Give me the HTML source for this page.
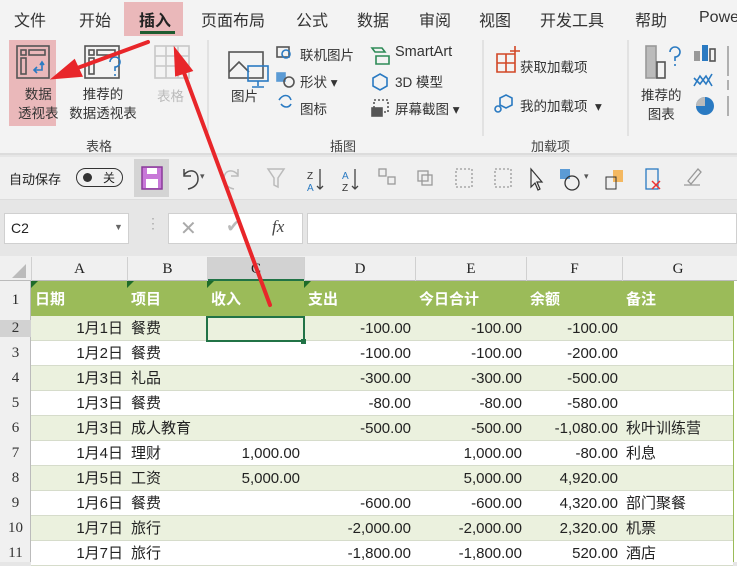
<!DOCTYPE html>
<html><head><meta charset="utf-8"><style>
*{margin:0;padding:0;box-sizing:border-box}
body{width:737px;height:562px;overflow:hidden;position:relative;background:#e6e6e6;font-family:"Liberation Sans","Noto Sans CJK SC",sans-serif;color:#222}
.a{position:absolute;white-space:nowrap}
.tab{top:7px;font-size:16px;color:#333}
.rb{font-size:13.5px;color:#333}
.gl{font-size:13px;color:#444}
.cell{position:absolute;height:25px;line-height:25px;font-size:15px;padding:0 4px;overflow:visible;white-space:nowrap}
.r{text-align:right}
</style></head><body>
<div class="a" style="left:0;top:0;width:737px;height:36px;background:#f3f3f3"></div>
<div class="a" style="left:124px;top:2px;width:59px;height:34px;background:#eab8ba"></div>
<div class="a tab" style="left:14px">文件</div>
<div class="a tab" style="left:79px">开始</div>
<div class="a tab" style="left:139px;font-weight:bold;color:#222">插入</div>
<div class="a" style="left:140px;top:31px;width:35px;height:3px;background:#1e5b2f"></div>
<div class="a tab" style="left:201px">页面布局</div>
<div class="a tab" style="left:296px">公式</div>
<div class="a tab" style="left:357px">数据</div>
<div class="a tab" style="left:419px">审阅</div>
<div class="a tab" style="left:479px">视图</div>
<div class="a tab" style="left:540px">开发工具</div>
<div class="a tab" style="left:635px">帮助</div>
<div class="a tab" style="left:699px;top:9px">Powe</div>
<div class="a" style="left:0;top:36px;width:737px;height:119px;background:#f3f3f3;border-bottom:2px solid #dcdcdc"></div>
<div class="a" style="left:9px;top:40px;width:47px;height:86px;background:#eab8ba"></div>
<svg class="a" style="left:0;top:36px" width="737" height="100">
<g fill="none" stroke="#555" stroke-width="1.6">
<rect x="17" y="10" width="32" height="32"/><rect x="21" y="14" width="5" height="5"/><rect x="29" y="14" width="16" height="5"/><rect x="21" y="22" width="5" height="16"/>
<path d="M42 26v8h-8m3-3l-3 3 3 3M40 29l2-3 2 3" stroke="#2a7ac2"/>
<rect x="85" y="10" width="34" height="32"/><rect x="89" y="14" width="5" height="5"/><rect x="97" y="14" width="18" height="5"/><rect x="89" y="22" width="5" height="16"/>
<path d="M110 26a5 5 0 1 1 5 5v4M115 38v2" stroke="#2a7ac2"/>
<g stroke="#c8c8c8"><rect x="155" y="10" width="34" height="32"/><path d="M155 20h34M155 30h34M166 10v32M178 10v32"/></g>
<rect x="229" y="16" width="34" height="26"/><path d="M229 36l10-10 10 10" />
<rect x="248" y="30" width="20" height="15" stroke="#2a7ac2"/><path d="M258 45v5M252 51h12" stroke="#2a7ac2"/>
<rect x="277" y="11" width="12" height="10"/><circle cx="286" cy="18" r="4" stroke="#2a7ac2"/>
<rect x="277" y="37" width="8" height="8" fill="#5b9bd5" stroke="#5b9bd5"/><circle cx="289" cy="46" r="5"/>
<path d="M279 64c4-6 10-6 12 0M281 68c3 4 8 4 10 0" stroke="#2a7ac2"/>
<path d="M372 12h10l3 4h-10zM376 20h13v8h-13z" stroke="#2e8b57"/>
<path d="M380 38l7 4v8l-7 4-7-4v-8z" stroke="#2a7ac2"/>
<rect x="374" y="64" width="14" height="12" stroke-dasharray="2 2"/><rect x="372" y="72" width="10" height="8" fill="#555"/>
<path d="M497 18h18v18h-18zM497 27h18M506 18v18M515 10v10M510 15h10" stroke="#d24726"/>
<path d="M506 59l6 3v7l-6 3-6-3v-7z" stroke="#2a7ac2"/><circle cx="498" cy="73" r="3" stroke="#2a7ac2"/>
<rect x="646" y="10" width="10" height="32" fill="#bbb" stroke="#999"/><rect x="657" y="26" width="8" height="16"/>
<path d="M670 16a5 5 0 1 1 5 5v4M675 28v2" stroke="#2a7ac2"/>
<rect x="694" y="15" width="6" height="10" fill="#999" stroke="none"/><rect x="702" y="9" width="6" height="16" fill="#2a7ac2" stroke="none"/><rect x="710" y="13" width="5" height="12"/>
<path d="M694 50l6-10 6 8 6-10M694 42l6 6 6-8 6 10" stroke="#2a7ac2"/>
<circle cx="705" cy="70" r="9" fill="#2a7ac2" stroke="none"/><path d="M705 61v9h-9a9 9 0 0 1 9-9z" fill="#bbb" stroke="none"/>
</g>
<path d="M728 10v30M728 44v10M728 60v20" stroke="#999" stroke-width="1.5"/>
<path d="M208 4v110M483 4v110M628 4v110" stroke="#d0d0d0"/>
</svg>
<div class="a rb" style="left:18px;top:85px;line-height:19px;text-align:center">数据<br>透视表</div>
<div class="a rb" style="left:65px;top:85px;line-height:19px;text-align:center;width:76px">推荐的<br>数据透视表</div>
<div class="a rb" style="left:157px;top:85px;color:#bbb">表格</div>
<div class="a gl" style="left:86px;top:136px">表格</div>
<div class="a rb" style="left:231px;top:85px">图片</div>
<div class="a rb" style="left:300px;top:44px">联机图片</div>
<div class="a rb" style="left:300px;top:71px">形状 ▾</div>
<div class="a rb" style="left:300px;top:98px">图标</div>
<div class="a gl" style="left:330px;top:136px">插图</div>
<div class="a rb" style="left:395px;top:44px;font-size:14.5px">SmartArt</div>
<div class="a rb" style="left:395px;top:71px">3D 模型</div>
<div class="a rb" style="left:395px;top:98px">屏幕截图 ▾</div>
<div class="a rb" style="left:520px;top:56px">获取加载项</div>
<div class="a rb" style="left:520px;top:95px">我的加载项 &nbsp;▾</div>
<div class="a gl" style="left:531px;top:136px">加载项</div>
<div class="a rb" style="left:641px;top:86px;line-height:19px;text-align:center">推荐的<br>图表</div>
<div class="a" style="left:0;top:157px;width:737px;height:43px;background:#f0f0f0;border-bottom:1px solid #ddd"></div>
<div class="a" style="left:9px;top:169px;font-size:13px">自动保存</div>
<div class="a" style="left:76px;top:168px;width:47px;height:19px;border:1.5px solid #333;border-radius:10px"></div>
<div class="a" style="left:83px;top:173px;width:9px;height:9px;border-radius:50%;background:#333"></div>
<div class="a" style="left:103px;top:169px;font-size:12px">关</div>
<div class="a" style="left:134px;top:159px;width:35px;height:38px;background:#d4d4d4"></div>
<svg class="a" style="left:0;top:157px" width="737" height="43">
<rect x="142" y="10" width="20" height="22" fill="#c878d8" stroke="#8a3a9a" stroke-width="1.5"/><rect x="147" y="11" width="10" height="6" fill="#fff"/><rect x="146" y="22" width="12" height="9" fill="#fff"/>
<g fill="none" stroke="#444" stroke-width="1.5"><path d="M184 12v7h7M184 18c4-6 14-6 14 4 0 6-5 9-10 10"/></g>
<g fill="none" stroke="#bbb" stroke-width="1.5"><path d="M238 12v7h-7M238 18c-4-6-14-6-14 4 0 6 5 9 10 10"/><path d="M268 12h16l-6 9v9l-4-2v-7z"/></g>
<text x="307" y="22" font-size="10" fill="#333" font-family="Liberation Sans">Z</text><text x="307" y="34" font-size="10" fill="#2a7ac2" font-family="Liberation Sans">A</text>
<text x="342" y="22" font-size="10" fill="#2a7ac2" font-family="Liberation Sans">A</text><text x="342" y="34" font-size="10" fill="#333" font-family="Liberation Sans">Z</text>
<g fill="none" stroke="#444" stroke-width="1.3"><path d="M320 12v20m-3-3l3 3 3-3M355 12v20m-3-3l3 3 3-3"/></g>
<g fill="none" stroke="#999" stroke-width="1.3"><rect x="379" y="12" width="7" height="7"/><rect x="388" y="20" width="7" height="7"/><rect x="418" y="14" width="10" height="10"/><rect x="422" y="18" width="10" height="10"/><rect x="456" y="12" width="16" height="18" stroke-dasharray="2 2"/><rect x="495" y="12" width="16" height="18" stroke-dasharray="2 2"/></g>
<path d="M531 12v18l4-4 3 7 2-1-3-7h5z" fill="none" stroke="#333" stroke-width="1.2"/>
<rect x="560" y="12" width="10" height="10" fill="#5b9bd5"/><circle cx="572" cy="26" r="7" fill="none" stroke="#333" stroke-width="1.3"/>
<rect x="613" y="13" width="10" height="12" fill="#f4b860"/><path d="M606 20h10v12h-10z" fill="none" stroke="#333"/>
<rect x="646" y="12" width="12" height="20" fill="none" stroke="#2a7ac2" stroke-width="1.3"/><path d="M652 24l8 8m0-8l-8 8" stroke="#e33" stroke-width="1.5"/>
<path d="M684 28h16M688 24l10-12 3 3-10 12z" fill="none" stroke="#999" stroke-width="1.3"/>
</svg>
<div class="a" style="left:200px;top:171px;font-size:9px;color:#555">▾</div>
<div class="a" style="left:584px;top:171px;font-size:9px;color:#555">▾</div>
<div class="a" style="left:4px;top:213px;width:125px;height:31px;background:#fff;border:1px solid #d0d0d0"></div>
<div class="a" style="left:11px;top:220px;font-size:14px">C2</div>
<div class="a" style="left:114px;top:222px;font-size:9px;color:#666">▼</div>
<div class="a" style="left:146px;top:215px;font-size:14px;color:#aaa">⋮</div>
<div class="a" style="left:168px;top:213px;width:135px;height:31px;background:#fff;border:1px solid #d0d0d0"></div>
<div class="a" style="left:180px;top:216px;font-size:20px;color:#aaa">✕</div>
<div class="a" style="left:226px;top:216px;font-size:18px;color:#bbb">✔</div>
<div class="a" style="left:272px;top:217px;font-size:17px;font-style:italic;font-family:'Liberation Serif',serif;color:#444">fx</div>
<div class="a" style="left:307px;top:213px;width:430px;height:31px;background:#fff;border:1px solid #d0d0d0"></div>
<div class="a" style="left:0;top:256px;width:737px;height:306px;background:#fff"></div>
<div class="a" style="left:0;top:256px;width:737px;height:25px;background:#f0f0f0;border-bottom:1px solid #bbb"></div>
<div class="a" style="left:207px;top:257px;width:97px;height:24px;background:#d2d2d2;border-bottom:2px solid #217346"></div>
<svg class="a" style="left:10px;top:262px" width="18" height="18"><path d="M16 2v14H2z" fill="#bbb"/></svg>
<div id="g"></div>
<svg class="a" style="left:0;top:0" width="737" height="562">
<g stroke="#e8262a" stroke-width="4" fill="#e8262a" stroke-linecap="round">
<path d="M148 42L72 70"/><path d="M56 77l18-15 6 13z"/>
<path d="M270 305L183 70"/><path d="M176 52l14 18-13 4z"/>
</g></svg>
<script>
var cols=[[0,31],[31,127],[127,207],[207,304],[304,415],[415,526],[526,622],[622,733]];
var L="ABCDEFG";var h="";
for(var i=0;i<7;i++){var c=cols[i+1];h+='<div class="a" style="left:'+c[0]+'px;top:257px;width:'+(c[1]-c[0])+'px;height:24px;line-height:24px;text-align:center;font-family:Liberation Serif,serif;font-size:15px;border-left:1px solid #d0d0d0">'+L[i]+'</div>';}
h+='<div class="a" style="left:0;top:281px;width:31px;height:281px;background:#f0f0f0;border-right:1px solid #bbb"></div>';
h+='<div class="a" style="left:31px;top:281px;width:702px;height:35px;background:#9bbb59"></div>';
var hd=["日期","项目","收入","支出","今日合计","余额","备注"];
for(var i=0;i<7;i++){h+='<div class="a" style="left:'+(cols[i+1][0]+4)+'px;top:288px;color:#fff;font-weight:bold;font-size:15px">'+hd[i]+'</div>';}
for(var i=1;i<5;i++)h+='<svg class="a" style="left:'+cols[i][0]+'px;top:281px" width="7" height="7"><path d="M0 0h7L0 7z" fill="#1e6b28"/></svg>';
h+='<div class="a" style="left:0;top:292px;width:31px;text-align:center;font-family:Liberation Serif,serif;font-size:15px">1</div>';
var d=[["1月1日","餐费","","-100.00","-100.00","-100.00",""],["1月2日","餐费","","-100.00","-100.00","-200.00",""],["1月3日","礼品","","-300.00","-300.00","-500.00",""],["1月3日","餐费","","-80.00","-80.00","-580.00",""],["1月3日","成人教育","","-500.00","-500.00","-1,080.00","秋叶训练营"],["1月4日","理财","1,000.00","","1,000.00","-80.00","利息"],["1月5日","工资","5,000.00","","5,000.00","4,920.00",""],["1月6日","餐费","","-600.00","-600.00","4,320.00","部门聚餐"],["1月7日","旅行","","-2,000.00","-2,000.00","2,320.00","机票"],["1月7日","旅行","","-1,800.00","-1,800.00","520.00","酒店"]];
for(var r=0;r<10;r++){var y=316+r*25;
h+='<div class="a" style="left:31px;top:'+y+'px;width:702px;height:25px;background:'+(r%2==0?'#ebf1de':'#fff')+';border-bottom:1px solid #d6dccb"></div>';
h+='<div class="a" style="left:0;top:'+(y+4)+'px;width:31px;text-align:center;font-family:Liberation Serif,serif;font-size:15px;color:#333;'+(r==0?'background:#d2d2d2;':'')+'">'+(r+2)+'</div>';
for(var i=0;i<7;i++){var c=cols[i+1];var right=(i!=1&&i!=6);
h+='<div class="cell'+(right?' r':'')+'" style="left:'+c[0]+'px;top:'+y+'px;width:'+(c[1]-c[0])+'px">'+d[r][i]+'</div>';}}
h+='<div class="a" style="left:733px;top:281px;width:1px;height:281px;background:#9bbb59"></div>';
h+='<div class="a" style="left:206px;top:316px;width:99px;height:26px;border:2px solid #217346"></div>';
h+='<div class="a" style="left:301px;top:339px;width:5px;height:5px;background:#217346"></div>';
document.getElementById("g").innerHTML=h;
</script>
</body></html>
